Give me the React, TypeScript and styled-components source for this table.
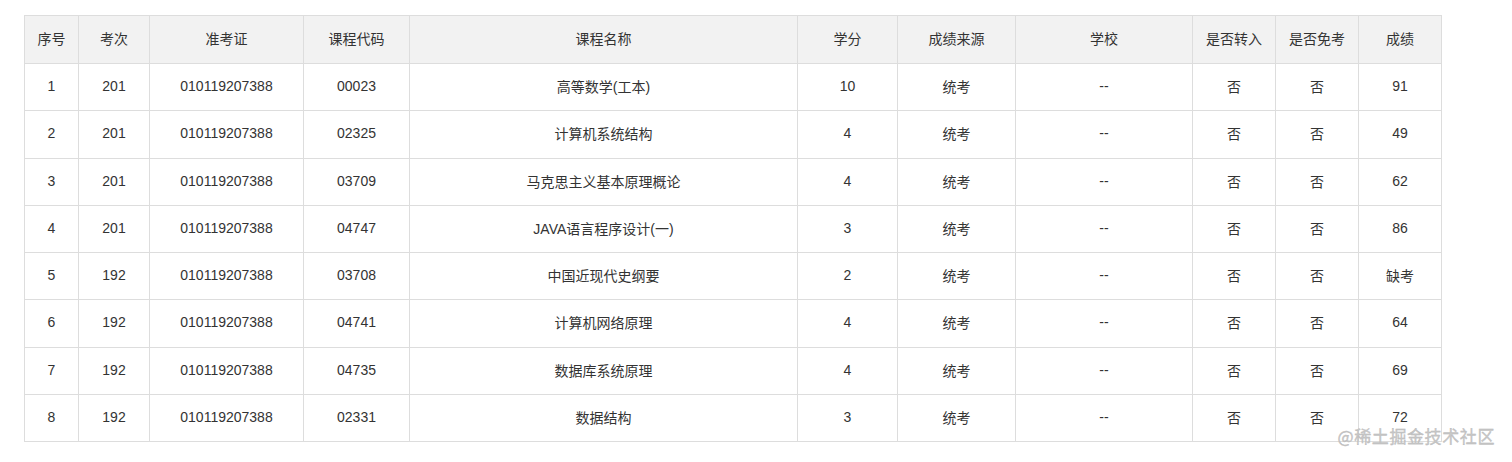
import React from "react";
import styled, { createGlobalStyle } from "styled-components";

const GlobalStyle = createGlobalStyle`
  html, body {
    margin: 0;
    padding: 0;
    background: #ffffff;
  }
  body {
    font-family: "Liberation Sans", "Noto Sans CJK SC", Arial, sans-serif;
    color: #333333;
  }
`;

const Page = styled.div`
  position: relative;
  width: 1512px;
  height: 462px;
  padding: 15px 0 0 24px;
  box-sizing: border-box;
  overflow: hidden;
`;

const Table = styled.table`
  border-collapse: collapse;
  table-layout: fixed;
  width: 1417px;
  font-size: 14px;
  color: #333333;
`;

const HeadRow = styled.tr`
  height: 48px;
`;

const BodyRow = styled.tr`
  height: 47.25px;
`;

const HeadCell = styled.th<{ $w: number }>`
  width: ${(p) => p.$w}px;
  padding: 0 0 3px;
  background: #f2f2f2;
  border: 1px solid #dddddd;
  font-weight: normal;
  text-align: center;
  vertical-align: middle;
  box-sizing: border-box;
`;

const Cell = styled.td`
  padding: 0 0 2px;
  border: 1px solid #dddddd;
  text-align: center;
  vertical-align: middle;
  white-space: nowrap;
`;

const Watermark = styled.div`
  position: absolute;
  right: 17px;
  bottom: 16px;
  font-family: "Noto Sans CJK SC", sans-serif;
  font-size: 17px;
  line-height: 20px;
  color: #c8c8c8;
  -webkit-text-stroke: 0.3px #b4b4b4;
  letter-spacing: 0.6px;
`;

const columns: [string, number][] = [
  ["序号", 54],
  ["考次", 71],
  ["准考证", 154],
  ["课程代码", 106],
  ["课程名称", 388],
  ["学分", 100],
  ["成绩来源", 118],
  ["学校", 177],
  ["是否转入", 83],
  ["是否免考", 83],
  ["成绩", 83],
];

const rows: string[][] = [
  ["1", "201", "010119207388", "00023", "高等数学(工本)", "10", "统考", "--", "否", "否", "91"],
  ["2", "201", "010119207388", "02325", "计算机系统结构", "4", "统考", "--", "否", "否", "49"],
  ["3", "201", "010119207388", "03709", "马克思主义基本原理概论", "4", "统考", "--", "否", "否", "62"],
  ["4", "201", "010119207388", "04747", "JAVA语言程序设计(一)", "3", "统考", "--", "否", "否", "86"],
  ["5", "192", "010119207388", "03708", "中国近现代史纲要", "2", "统考", "--", "否", "否", "缺考"],
  ["6", "192", "010119207388", "04741", "计算机网络原理", "4", "统考", "--", "否", "否", "64"],
  ["7", "192", "010119207388", "04735", "数据库系统原理", "4", "统考", "--", "否", "否", "69"],
  ["8", "192", "010119207388", "02331", "数据结构", "3", "统考", "--", "否", "否", "72"],
];

export default function App() {
  return (
    <>
      <GlobalStyle />
      <Page>
        <Table>
          <thead>
            <HeadRow>
              {columns.map(([t, w]) => (
                <HeadCell key={t} $w={w}>
                  {t}
                </HeadCell>
              ))}
            </HeadRow>
          </thead>
          <tbody>
            {rows.map((r) => (
              <BodyRow key={r[0]}>
                {r.map((c, i) => (
                  <Cell key={i}>{c}</Cell>
                ))}
              </BodyRow>
            ))}
          </tbody>
        </Table>
        <Watermark>@稀土掘金技术社区</Watermark>
      </Page>
    </>
  );
}
